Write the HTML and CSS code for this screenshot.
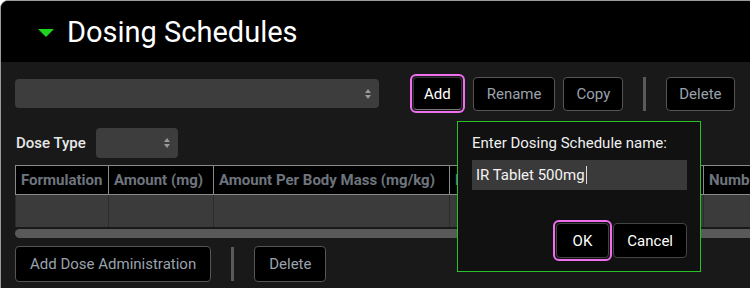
FILE: index.html
```html
<!DOCTYPE html>
<html lang="en">
<head>
    <meta charset="UTF-8">
    <title>Dosing Schedules</title>
    <link rel="stylesheet" href="styles.css">
</head>
<body>
    <div class="panel">
        <div class="panel-header">
            <span class="caret"></span>
            <h1>Dosing Schedules</h1>
        </div>

        <div class="panel-body">
            <div class="toolbar">
                <div class="select wide"><span class="spin"></span></div>
                <div class="highlight"><button class="btn primary">Add</button></div>
                <button class="btn">Rename</button>
                <button class="btn snug">Copy</button>
                <span class="sep"></span>
                <button class="btn snug">Delete</button>
            </div>

            <div class="dose-type">
                <label>Dose Type</label>
                <div class="select small"><span class="spin"></span></div>
            </div>

            <div class="grid">
                <div class="grid-row head">
                    <div class="cell c1">Formulation</div>
                    <div class="cell c2">Amount (mg)</div>
                    <div class="cell c3">Amount Per Body Mass (mg/kg)</div>
                    <div class="cell c4">Dosing Interval</div>
                    <div class="cell c5">Number of Doses</div>
                </div>
                <div class="grid-row data">
                    <div class="cell c1"></div>
                    <div class="cell c2"></div>
                    <div class="cell c3"></div>
                    <div class="cell c4"></div>
                    <div class="cell c5"></div>
                </div>
                <div class="scrollbar"></div>
            </div>

            <div class="toolbar bottom">
                <button class="btn tall">Add Dose Administration</button>
                <span class="sep"></span>
                <button class="btn tall">Delete</button>
            </div>
        </div>

        <div class="dialog">
            <div class="dialog-label">Enter Dosing Schedule name:</div>
            <div class="dialog-input">IR Tablet 500mg<span class="cursor"></span></div>
            <div class="dialog-actions">
                <div class="highlight"><button class="btn light ok">OK</button></div>
                <button class="btn light">Cancel</button>
            </div>
        </div>
    </div>
</body>
</html>
```

FILE: styles.css
```css
body {
    margin: 0;
    background: #fff;
    font-family: Roboto, "Liberation Sans", sans-serif;
    overflow: hidden;
}
.panel {
    position: relative;
    width: 820px;
    height: 300px;
    border: 1px solid #9a9a9a;
    border-radius: 8px 0 0 0;
    background: #191919;
    overflow: hidden;
}
.panel-header {
    height: 61px;
    background: #000;
    display: flex;
    align-items: center;
    padding-left: 37px;
    gap: 13px;
}
.caret {
    width: 0;
    height: 0;
    border-left: 8px solid transparent;
    border-right: 8px solid transparent;
    border-top: 8px solid #1ed41e;
    margin-top: 2px;
}
h1 {
    margin: 0;
    color: #fff;
    font-size: 29px;
    font-weight: 400;
}
.panel-body {
    padding: 12px 14px 0 14px;
}
.toolbar {
    display: flex;
    align-items: center;
    gap: 8px;
    height: 39px;
}
.select {
    position: relative;
    background: #3d3d3d;
    border-radius: 4px;
    height: 29px;
}
.select.wide {
    width: 364px;
    margin-right: 23px;
}
.select.small {
    width: 82px;
    height: 30px;
}
.spin {
    position: absolute;
    right: 7px;
    top: 50%;
    width: 7px;
    height: 10px;
    transform: translateY(-50%);
}
.spin::before, .spin::after {
    content: "";
    position: absolute;
    left: 0;
    border-left: 3.5px solid transparent;
    border-right: 3.5px solid transparent;
}
.spin::before {
    top: 0;
    border-bottom: 4px solid #9a9a9a;
}
.spin::after {
    bottom: 0;
    border-top: 4px solid #9a9a9a;
}
.btn {
    font-family: Roboto, "Liberation Sans", sans-serif;
    font-size: 15px;
    color: #9aa2ac;
    background: #000;
    border: 1px solid #555;
    border-radius: 4px;
    height: 34px;
    padding: 0 13px;
    cursor: pointer;
}
.btn.snug {
    padding: 0 12px;
}
.btn.primary {
    color: #fff;
    border-color: #333;
    border-bottom-color: #777;
    height: 33px;
    padding: 0 10px;
}
.btn.tall {
    height: 36px;
    padding: 0 14px;
}
.btn.light {
    color: #fff;
    height: 35px;
    padding: 0 13px;
    border-color: #444;
}
.btn.ok {
    padding: 0 16px;
}
.highlight {
    border: 2px solid #f06ef0;
    border-radius: 6px;
    padding: 1px;
    display: flex;
}
.sep {
    width: 3px;
    height: 34px;
    background: #5a5a5a;
    margin: 0 12px;
}
.dose-type {
    display: flex;
    align-items: center;
    gap: 10px;
    margin-top: 14px;
    height: 32px;
}
.dose-type label {
    color: #e8e8e8;
    font-size: 15px;
    font-weight: 500;
    padding-left: 1px;
}
.grid {
    margin-top: 6px;
    width: 800px;
}
.grid-row {
    display: flex;
}
.cell {
    box-sizing: border-box;
    flex: none;
}
.grid-row.head {
    background: #000;
    border-top: 1px solid #8a8a8a;
    border-left: 1px solid #8a8a8a;
    height: 29px;
}
.head .cell {
    border-right: 1px solid #8a8a8a;
    border-bottom: 1px solid #8a8a8a;
    color: #6e757e;
    font-size: 15px;
    font-weight: 700;
    display: flex;
    align-items: center;
    padding-left: 5px;
    white-space: nowrap;
    overflow: hidden;
}
.grid-row.data {
    background: #3b3b3b;
    height: 32px;
    border-left: 1px solid #2c2c2c;
}
.data .cell {
    border-right: 1px solid #2c2c2c;
}
.c1 { width: 93px; }
.c2 { width: 105px; }
.c3 { width: 236px; }
.c4 { width: 254px; }
.c5 { width: 150px; }
.scrollbar {
    height: 9px;
    margin-top: 2px;
    background: #595959;
    border-radius: 5px;
    width: 790px;
}
.toolbar.bottom {
    margin-top: 8px;
    height: 36px;
}
.dialog {
    position: absolute;
    box-sizing: border-box;
    left: 456px;
    top: 120px;
    width: 244px;
    height: 151px;
    background: #111;
    border: 1px solid #27c227;
    display: flex;
    flex-direction: column;
    padding: 12px 13px 10px 14px;
}
.dialog-label {
    color: #f0f0f0;
    font-size: 15px;
}
.dialog-input {
    margin-top: 8px;
    height: 30px;
    background: #3a3a3a;
    color: #f4f4f4;
    font-size: 15px;
    display: flex;
    align-items: center;
    padding-left: 4px;
}
.cursor {
    width: 1px;
    height: 18px;
    background: #ddd;
    margin-left: 1px;
}
.dialog-actions {
    margin-top: auto;
    display: flex;
    justify-content: flex-end;
    align-items: center;
    gap: 1px;
}
```
